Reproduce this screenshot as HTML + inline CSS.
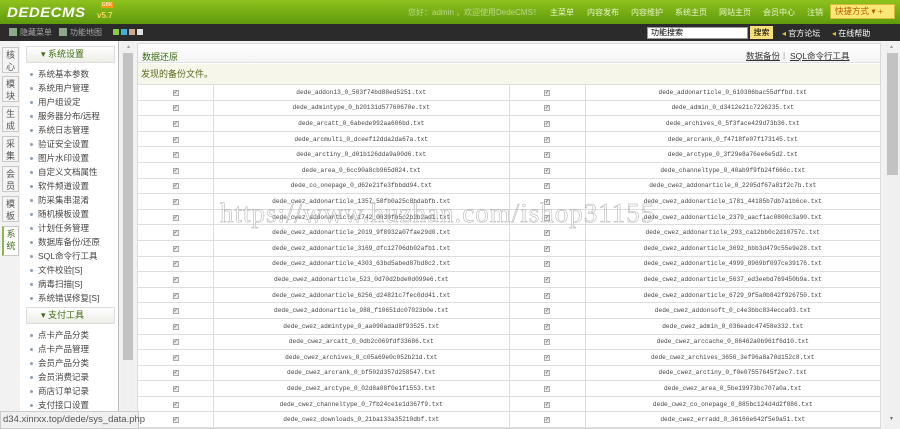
<!DOCTYPE html>
<html><head><meta charset="utf-8"><style>
*{margin:0;padding:0;box-sizing:border-box}
body{width:900px;height:429px;overflow:hidden;background:#f2f2f2;font-family:"Liberation Sans","Noto Sans CJK SC",sans-serif;font-size:9px;position:relative}
.a{position:absolute}
#top{left:0;top:0;width:900px;height:24px;background:linear-gradient(#8fc21e,#5f9a0c)}
#bar{left:0;top:24px;width:900px;height:17px;background:#2b2b2b}
.nav{top:7px;font-size:8px;color:#e8f5c8}
.tab{left:2px;width:17px;border:1px solid #c8c8c8;background:#f4f4f4;font-size:9px;color:#555;text-align:center;line-height:12px;padding-top:1px}
#menu{left:20px;top:41px;width:99px;height:388px;background:#fff;border-right:1px solid #bbb}
.mh{left:6px;width:89px;height:17px;border:1px solid #ddd;background:linear-gradient(#fff,#eceee6);color:#3d6b12;font-size:9px;line-height:15px;padding-left:14px}
.mi{left:10px;font-size:8.5px;color:#444;white-space:nowrap}
.mi:before{content:"";display:inline-block;width:3px;height:3px;border-radius:50%;background:#8aa0b8;margin-right:5px;vertical-align:middle}
#main{left:137px;top:43px;width:744px;height:386px;background:#fff;border:1px solid #d8d8d8}
table{border-collapse:collapse;position:absolute;left:137px;top:84px;width:744px}
td{border:1px solid #ddd;height:15.6px;text-align:center;font-family:"Liberation Mono",monospace;font-size:6.2px;color:#444;padding:0;background:#fff}
td.c{width:76px}
.cb{display:inline-block;width:6px;height:6px;border:1px solid #aaa;background:#eee;font-size:6px;line-height:4px;color:#333}
#wm{left:220px;top:198px;font-family:"Liberation Serif",serif;font-size:27px;color:rgba(255,255,255,.2);-webkit-text-stroke:0.5px #aaa;letter-spacing:1px;white-space:nowrap}
</style></head><body>
<div id="top" class="a"></div>
<div class="a" style="left:7px;top:4px;font:italic bold 15px 'Liberation Sans',sans-serif;color:#fff;letter-spacing:0.5px;transform:scaleY(0.95)">DEDECMS</div>
<div class="a" style="left:97px;top:11px;font:bold 8px 'Liberation Sans';color:#f7d85a">v5.7</div>
<div class="a" style="left:101px;top:2px;width:12px;height:6px;background:#f39c12;font-size:5px;color:#fff;line-height:6px;text-align:center">GBK</div>
<div class="a nav" style="left:408px;color:#b9d88a">您好：admin ，欢迎使用DedeCMS！</div>
<div class="a nav" style="left:550px">主菜单</div>
<div class="a nav" style="left:587px">内容发布</div>
<div class="a nav" style="left:631px">内容维护</div>
<div class="a nav" style="left:675px">系统主页</div>
<div class="a nav" style="left:719px">网站主页</div>
<div class="a nav" style="left:763px">会员中心</div>
<div class="a nav" style="left:807px">注销</div>
<div class="a" style="left:830px;top:4px;width:65px;height:15px;background:#f8e878;border:1px solid #d8b838;font-size:8.5px;color:#b65c00;line-height:13px;padding-left:4px">快捷方式 ▾ +</div>
<div id="bar" class="a"></div>
<div class="a" style="left:9px;top:28px;width:8px;height:8px;background:#8a8"></div>
<div class="a" style="left:20px;top:27px;color:#aaa;font-size:8px">隐藏菜单</div>
<div class="a" style="left:59px;top:28px;width:8px;height:8px;background:#8a8"></div>
<div class="a" style="left:70px;top:27px;color:#aaa;font-size:8px">功能地图</div>
<div class="a" style="left:113px;top:29px;width:6px;height:6px;background:#8c4"></div>
<div class="a" style="left:121px;top:29px;width:6px;height:6px;background:#4ad"></div>
<div class="a" style="left:129px;top:29px;width:6px;height:6px;background:#ca8"></div>
<div class="a" style="left:137px;top:29px;width:6px;height:6px;background:#ddd"></div>
<div class="a" style="left:647px;top:27px;width:101px;height:12px;background:#fff;border:1px solid #999;font-size:8px;line-height:10px;padding-left:3px">功能搜索</div>
<div class="a" style="left:750px;top:26px;width:23px;height:13px;background:#f6e07a;font-size:8px;text-align:center;line-height:13px">搜索</div>
<div class="a" style="left:782px;top:28px;color:#fff;font-size:8px"><span style="color:#e5c030">◂</span> 官方论坛</div>
<div class="a" style="left:832px;top:28px;color:#fff;font-size:8px"><span style="color:#e5c030">◂</span> 在线帮助</div>

<div class="a tab" style="top:47px;height:26px">核<br>心</div>
<div class="a tab" style="top:76px;height:26px">模<br>块</div>
<div class="a tab" style="top:106px;height:26px">生<br>成</div>
<div class="a tab" style="top:136px;height:26px">采<br>集</div>
<div class="a tab" style="top:166px;height:26px">会<br>员</div>
<div class="a tab" style="top:196px;height:26px">模<br>板</div>
<div class="a tab" style="top:226px;height:30px;background:#fff;border-left:2px solid #8ab84a;color:#3d6b12">系<br>统</div>
<div id="menu" class="a"></div>
<div class="a mh" style="left:26px;top:46px">▾ 系统设置</div>
<div class="a mi" style="left:30px;top:68px">系统基本参数</div>
<div class="a mi" style="left:30px;top:82px">系统用户管理</div>
<div class="a mi" style="left:30px;top:96px">用户组设定</div>
<div class="a mi" style="left:30px;top:110px">服务器分布/远程</div>
<div class="a mi" style="left:30px;top:124px">系统日志管理</div>
<div class="a mi" style="left:30px;top:138px">验证安全设置</div>
<div class="a mi" style="left:30px;top:152px">图片水印设置</div>
<div class="a mi" style="left:30px;top:166px">自定义文档属性</div>
<div class="a mi" style="left:30px;top:180px">软件频道设置</div>
<div class="a mi" style="left:30px;top:194px">防采集串混淆</div>
<div class="a mi" style="left:30px;top:208px">随机模板设置</div>
<div class="a mi" style="left:30px;top:222px">计划任务管理</div>
<div class="a mi" style="left:30px;top:236px">数据库备份/还原</div>
<div class="a mi" style="left:30px;top:250px">SQL命令行工具</div>
<div class="a mi" style="left:30px;top:264px">文件校验[S]</div>
<div class="a mi" style="left:30px;top:278px">病毒扫描[S]</div>
<div class="a mi" style="left:30px;top:292px">系统错误修复[S]</div>
<div class="a mh" style="left:26px;top:307px">▾ 支付工具</div>
<div class="a mi" style="left:30px;top:329px">点卡产品分类</div>
<div class="a mi" style="left:30px;top:343px">点卡产品管理</div>
<div class="a mi" style="left:30px;top:357px">会员产品分类</div>
<div class="a mi" style="left:30px;top:371px">会员消费记录</div>
<div class="a mi" style="left:30px;top:385px">商店订单记录</div>
<div class="a mi" style="left:30px;top:399px">支付接口设置</div>
<div class="a" style="left:121px;top:41px;width:13px;height:388px;background:#f0f0f0"></div>
<div class="a" style="left:123px;top:53px;width:10px;height:307px;background:#c2c2c2"></div>
<div class="a" style="left:126px;top:44px;font-size:5px;color:#999">▲</div>

<div id="main" class="a"></div>
<div class="a" style="left:138px;top:44px;width:742px;height:19px;background:linear-gradient(#fff,#f4f4f4);border-bottom:1px solid #e2e2e2"></div>
<div class="a" style="left:142px;top:50px;font-size:9px;color:#3d6b12">数据还原</div>
<div class="a" style="left:746px;top:50px;font-size:8.5px;color:#333;text-decoration:underline">数据备份</div>
<div class="a" style="left:783px;top:50px;font-size:8.5px;color:#999">|</div>
<div class="a" style="left:790px;top:50px;font-size:8.5px;color:#333;text-decoration:underline">SQL命令行工具</div>
<div class="a" style="left:138px;top:64px;width:742px;height:20px;background:#f6f7ea"></div>
<div class="a" style="left:141px;top:67px;font-size:9px;color:#5a6a1a">发现的备份文件。</div>
<table>
<tr><td class="c"><span class="cb">✓</span></td><td>dede_addon13_0_503f74bd88ed5251.txt</td><td class="c"><span class="cb">✓</span></td><td>dede_addonarticle_0_610386bac55dffbd.txt</td></tr>
<tr><td class="c"><span class="cb">✓</span></td><td>dede_admintype_0_b20131d57760670e.txt</td><td class="c"><span class="cb">✓</span></td><td>dede_admin_0_d3412e21c7226235.txt</td></tr>
<tr><td class="c"><span class="cb">✓</span></td><td>dede_arcatt_0_6abede992aa606bd.txt</td><td class="c"><span class="cb">✓</span></td><td>dede_archives_0_5f3face429d73b36.txt</td></tr>
<tr><td class="c"><span class="cb">✓</span></td><td>dede_arcmulti_0_dceef12dda2da67a.txt</td><td class="c"><span class="cb">✓</span></td><td>dede_arcrank_0_f4718fe07f173145.txt</td></tr>
<tr><td class="c"><span class="cb">✓</span></td><td>dede_arctiny_0_d01b126dda9a00d6.txt</td><td class="c"><span class="cb">✓</span></td><td>dede_arctype_0_3f29e8a76ee6e5d2.txt</td></tr>
<tr><td class="c"><span class="cb">✓</span></td><td>dede_area_0_6cc90a8cb965d824.txt</td><td class="c"><span class="cb">✓</span></td><td>dede_channeltype_0_40ab9f9fb24f666c.txt</td></tr>
<tr><td class="c"><span class="cb">✓</span></td><td>dede_co_onepage_0_d62e21fe3fbbdd94.txt</td><td class="c"><span class="cb">✓</span></td><td>dede_cwez_addonarticle_0_2205df67a81f2c7b.txt</td></tr>
<tr><td class="c"><span class="cb">✓</span></td><td>dede_cwez_addonarticle_1357_58fb0a25c8bdabfb.txt</td><td class="c"><span class="cb">✓</span></td><td>dede_cwez_addonarticle_1781_44185b7db7a1b6ce.txt</td></tr>
<tr><td class="c"><span class="cb">✓</span></td><td>dede_cwez_addonarticle_1742_0039fb5c2b2b2ad1.txt</td><td class="c"><span class="cb">✓</span></td><td>dede_cwez_addonarticle_2379_aacf1ac0800c3a90.txt</td></tr>
<tr><td class="c"><span class="cb">✓</span></td><td>dede_cwez_addonarticle_2019_9f8932a07fae29d0.txt</td><td class="c"><span class="cb">✓</span></td><td>dede_cwez_addonarticle_293_ca12bb0c2d10757c.txt</td></tr>
<tr><td class="c"><span class="cb">✓</span></td><td>dede_cwez_addonarticle_3169_dfc12706db02afb1.txt</td><td class="c"><span class="cb">✓</span></td><td>dede_cwez_addonarticle_3692_bbb3d479c55e9e28.txt</td></tr>
<tr><td class="c"><span class="cb">✓</span></td><td>dede_cwez_addonarticle_4303_63bd5abed87bd8c2.txt</td><td class="c"><span class="cb">✓</span></td><td>dede_cwez_addonarticle_4999_8969bf097ce39176.txt</td></tr>
<tr><td class="c"><span class="cb">✓</span></td><td>dede_cwez_addonarticle_523_0d70d2bde0d099e6.txt</td><td class="c"><span class="cb">✓</span></td><td>dede_cwez_addonarticle_5637_ed3eebd769450b9a.txt</td></tr>
<tr><td class="c"><span class="cb">✓</span></td><td>dede_cwez_addonarticle_6256_d24821c7fec0dd41.txt</td><td class="c"><span class="cb">✓</span></td><td>dede_cwez_addonarticle_6729_9f5a0b842f926750.txt</td></tr>
<tr><td class="c"><span class="cb">✓</span></td><td>dede_cwez_addonarticle_988_f10651dc07023b0e.txt</td><td class="c"><span class="cb">✓</span></td><td>dede_cwez_addonsoft_0_c4e3bbc834ecca03.txt</td></tr>
<tr><td class="c"><span class="cb">✓</span></td><td>dede_cwez_admintype_0_aa090adad8f93525.txt</td><td class="c"><span class="cb">✓</span></td><td>dede_cwez_admin_0_036eadc47458e332.txt</td></tr>
<tr><td class="c"><span class="cb">✓</span></td><td>dede_cwez_arcatt_0_0db2c069fdf33686.txt</td><td class="c"><span class="cb">✓</span></td><td>dede_cwez_arccache_0_86462a0b961f6d10.txt</td></tr>
<tr><td class="c"><span class="cb">✓</span></td><td>dede_cwez_archives_0_c05a69e0c052b21d.txt</td><td class="c"><span class="cb">✓</span></td><td>dede_cwez_archives_3656_3ef96a8a70d152c8.txt</td></tr>
<tr><td class="c"><span class="cb">✓</span></td><td>dede_cwez_arcrank_0_bf502d357d258547.txt</td><td class="c"><span class="cb">✓</span></td><td>dede_cwez_arctiny_0_f0e07557645f2ec7.txt</td></tr>
<tr><td class="c"><span class="cb">✓</span></td><td>dede_cwez_arctype_0_02d8a08f0e1f1553.txt</td><td class="c"><span class="cb">✓</span></td><td>dede_cwez_area_0_5be19973bc707a0a.txt</td></tr>
<tr><td class="c"><span class="cb">✓</span></td><td>dede_cwez_channeltype_0_7fb24ce1e1d367f9.txt</td><td class="c"><span class="cb">✓</span></td><td>dede_cwez_co_onepage_0_885bc124d4d2f086.txt</td></tr>
<tr><td class="c"><span class="cb">✓</span></td><td>dede_cwez_downloads_0_21ba133a35210dbf.txt</td><td class="c"><span class="cb">✓</span></td><td>dede_cwez_erradd_0_36166e642f5e9a51.txt</td></tr>
</table>
<div id="wm" class="a">https://www.huzhan.com/ishop31155</div>
<div class="a" style="left:885px;top:41px;width:15px;height:388px;background:#f0f0f0"></div>
<div class="a" style="left:887px;top:53px;width:11px;height:122px;background:#c2c2c2"></div>
<div class="a" style="left:889px;top:44px;font-size:5px;color:#999">▲</div>
<div class="a" style="left:889px;top:416px;font-size:5px;color:#666">▼</div>
<div class="a" style="left:0;top:411px;width:139px;height:18px;background:#f0f0f0;border:1px solid #ccc;font-size:9.5px;color:#555;line-height:16px;padding-left:2px;white-space:nowrap">d34.xinrxx.top/dede/sys_data.php</div>
</body></html>
